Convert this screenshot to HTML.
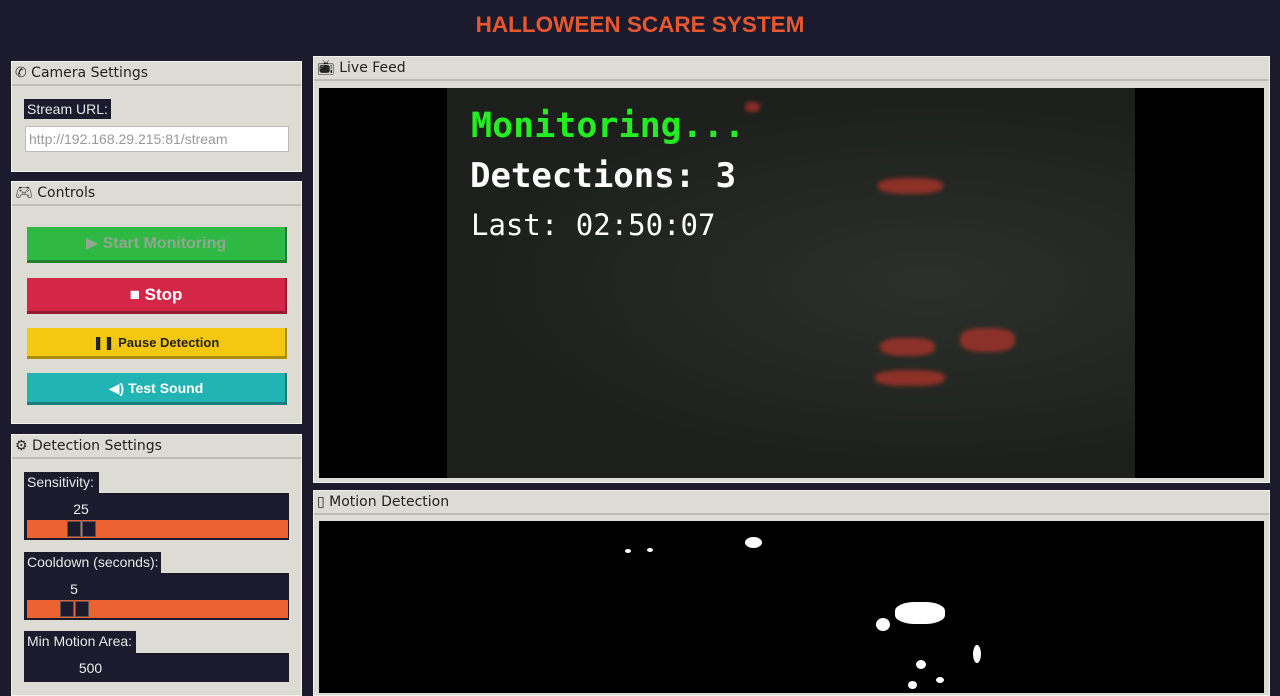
<!DOCTYPE html>
<html><head><style>
*{margin:0;padding:0;box-sizing:border-box}
body{width:1280px;height:696px;background:#1b1b2d;font-family:"Liberation Sans","DejaVu Sans",sans-serif;position:relative;overflow:hidden}
.abs{position:absolute;white-space:nowrap}
.title{left:0;width:1280px;top:12px;text-align:center;color:#e8572f;font-weight:bold;font-size:22.5px}
.panel{background:#dcdcd4;border:1px solid #f2f2ec}
.hdr{font-family:"DejaVu Sans",sans-serif;font-size:14px;color:#222;border-bottom:2px solid #bdbdb6;height:24px;line-height:22px;padding-left:3px}
.lbl{background:#1b1b2d;color:#e8e8e8;font-size:14px;padding:2px 3px}
.btn{left:27px;width:260px;text-align:center;font-weight:bold;border-bottom:3px solid rgba(0,0,0,.3);border-right:2px solid rgba(0,0,0,.3)}
.dark{background:#1b1b2d}
.slider{background:#ec6233;height:18px;left:27px;width:261px}
.knob{position:absolute;top:1px;width:14px;height:16px;background:#1b1b2d;border:1px solid #555}
.val{color:#eee;font-size:14px;text-align:center}
.dot{position:absolute;background:#fff;border-radius:50%}
.red{position:absolute;background:#b8342a;border-radius:40%;opacity:.7;filter:blur(2px)}
</style></head><body>
<div class="abs title">HALLOWEEN SCARE SYSTEM</div>

<div class="abs panel" style="left:11px;top:61px;width:291px;height:111px">
<div class="hdr">&#x2706; Camera Settings</div></div>
<div class="abs lbl" style="left:24px;top:99px">Stream URL:</div>
<div class="abs" style="left:25px;top:126px;width:264px;height:26px;background:#fff;border:1px solid #bbb;color:#999;font-size:14px;line-height:24px;padding-left:3px">http://192.168.29.215:81/stream</div>

<div class="abs panel" style="left:11px;top:181px;width:291px;height:243px">
<div class="hdr">&#x1F3AE;&#xFE0E; Controls</div></div>
<div class="abs btn" style="top:227px;height:36px;background:#2fb843;color:#8fa88f;font-size:16px;line-height:33px">▶ Start Monitoring</div>
<div class="abs btn" style="top:278px;height:36px;background:#d42748;color:#fff;font-size:17px;line-height:33px">■ Stop</div>
<div class="abs btn" style="top:328px;height:31px;background:#f5c710;color:#222;font-size:13px;line-height:29px">❚❚ Pause Detection</div>
<div class="abs btn" style="top:373px;height:32px;background:#22b4b4;color:#fff;font-size:14px;line-height:30px">◀) Test Sound</div>

<div class="abs panel" style="left:11px;top:434px;width:291px;height:262px">
<div class="hdr">⚙ Detection Settings</div></div>
<div class="abs lbl" style="left:24px;top:472px;width:75px;height:22px">Sensitivity:</div>
<div class="abs dark" style="left:24px;top:493px;width:265px;height:47px"></div>
<div class="abs val" style="left:24px;top:501px;width:114px">25</div>
<div class="abs slider" style="top:520px"><div class="knob" style="left:40px"></div><div class="knob" style="left:55px"></div></div>
<div class="abs lbl" style="left:24px;top:552px;width:137px;height:22px">Cooldown (seconds):</div>
<div class="abs dark" style="left:24px;top:573px;width:265px;height:47px"></div>
<div class="abs val" style="left:24px;top:581px;width:100px">5</div>
<div class="abs slider" style="top:600px"><div class="knob" style="left:33px"></div><div class="knob" style="left:48px"></div></div>
<div class="abs lbl" style="left:24px;top:631px;width:112px;height:22px">Min Motion Area:</div>
<div class="abs dark" style="left:24px;top:653px;width:265px;height:29px"></div>
<div class="abs val" style="left:24px;top:660px;width:133px">500</div>

<div class="abs panel" style="left:313px;top:56px;width:957px;height:427px">
<div class="hdr" style="height:24px">📺&#xFE0E; Live Feed</div></div>
<div class="abs" style="left:319px;top:88px;width:945px;height:390px;background:#000"></div>
<div class="abs" style="left:447px;top:88px;width:688px;height:390px;background:radial-gradient(ellipse at 70% 50%,#2c302b,#1c1f1c 70%)"></div>
<div class="red" style="left:878px;top:178px;width:65px;height:16px"></div>
<div class="red" style="left:880px;top:338px;width:55px;height:18px"></div>
<div class="red" style="left:960px;top:328px;width:55px;height:24px"></div>
<div class="red" style="left:875px;top:370px;width:70px;height:16px"></div>
<div class="red" style="left:745px;top:102px;width:15px;height:10px"></div>
<div class="abs" style="left:471px;top:106px;color:#22ee22;font-family:'DejaVu Sans Mono',monospace;font-weight:bold;font-size:35px">Monitoring...</div>
<div class="abs" style="left:470px;top:156px;color:#fff;font-family:'DejaVu Sans Mono',monospace;font-weight:bold;font-size:34px">Detections: 3</div>
<div class="abs" style="left:471px;top:208px;color:#fff;font-family:'DejaVu Sans Mono',monospace;font-size:29px">Last: 02:50:07</div>

<div class="abs panel" style="left:313px;top:490px;width:957px;height:206px">
<div class="hdr" style="height:24px">▯ Motion Detection</div></div>
<div class="abs" style="left:319px;top:521px;width:945px;height:172px;background:#000"></div>
<div class="dot" style="left:745px;top:537px;width:17px;height:11px"></div>
<div class="dot" style="left:625px;top:549px;width:6px;height:4px"></div>
<div class="dot" style="left:647px;top:548px;width:6px;height:4px"></div>
<div class="dot" style="left:895px;top:602px;width:50px;height:22px;border-radius:40%"></div>
<div class="dot" style="left:876px;top:618px;width:14px;height:13px"></div>
<div class="dot" style="left:973px;top:645px;width:8px;height:18px"></div>
<div class="dot" style="left:916px;top:660px;width:10px;height:9px"></div>
<div class="dot" style="left:908px;top:681px;width:9px;height:8px"></div>
<div class="dot" style="left:936px;top:677px;width:8px;height:6px"></div>
</body></html>
